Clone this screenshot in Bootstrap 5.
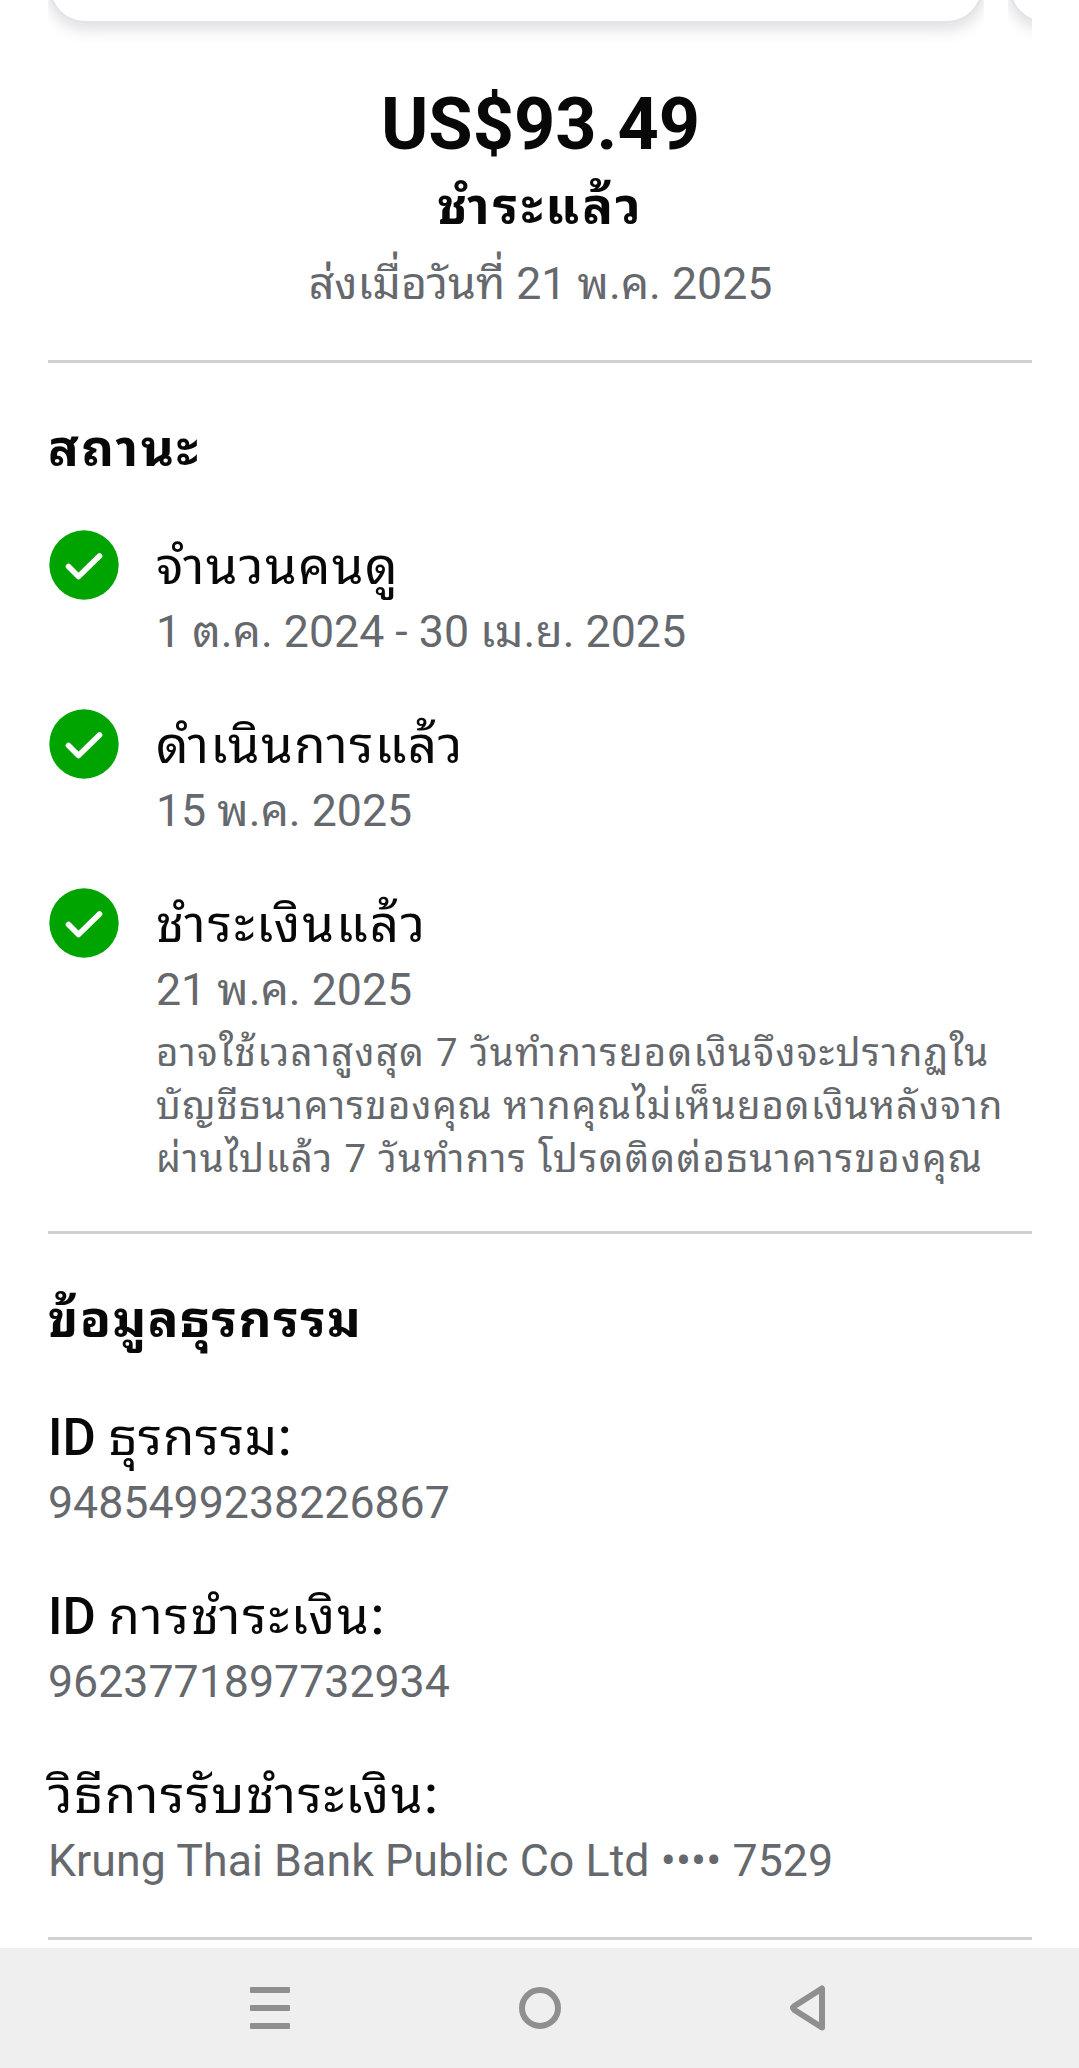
<!DOCTYPE html>
<html lang="th">
<head>
<meta charset="utf-8">
<meta name="viewport" content="width=device-width, initial-scale=1">
<title>US$93.49</title>
<link href="https://cdn.jsdelivr.net/npm/bootstrap@5.3.0/dist/css/bootstrap.min.css" rel="stylesheet">
<script src="https://cdn.jsdelivr.net/npm/bootstrap@5.3.0/dist/js/bootstrap.bundle.min.js"></script>
<style>
  body { font-family: Roboto, "Noto Sans Thai Looped", "Noto Sans", sans-serif; color: #080809; background: #fff; }
  .screen { height: 2068px; }
  .pay-body { padding: 0 47px 0 48px; }
  /* carousel of payouts, scrolled so only the bottom edge shows */
  .strip { height: 83px; gap: 24px; }
  .strip-slot { width: 936px; height: 60px; overflow: hidden; }
  .strip-slot.next-slot { width: 24px; }
  .payout { width: 936px; height: 180px; margin-top: -156px; border: 3px solid #e2e5e9; border-radius: 37px; box-shadow: 0 5px 16px rgba(0,0,0,.14); }
  .amount { font-size: 72px; line-height: 84px; font-weight: 700; padding-left: 1px; }
  .line-title { font-size: 51px; line-height: 60px; white-space: nowrap; }
  .line-sub { font-size: 44.7px; line-height: 60px; color: #65686c; white-space: nowrap; }
  .line-note { font-size: 38.4px; line-height: 53px; color: #65686c; margin-top: 6px; white-space: nowrap; }
  .paid { margin-top: 10px; padding-left: 1px; letter-spacing: 3px; }
  .sent { margin-top: 17px; padding-left: 1px; }
  .rule { height: 3px; background: #ced0d4; margin-top: 46px; }
  .section-head { margin-top: 56px; margin-bottom: 50px; }
  .step { gap: 36px; margin-bottom: 46px; }
  .step:last-child { margin-bottom: 0; }
  .step-text { padding-top: 8px; }
  .step-text .line-sub { margin-top: 5px; }
  .info-head { margin-top: 56px; margin-bottom: 58px; }
  .info { margin-bottom: 54px; }
  .info:last-child { margin-bottom: 0; }
  .info .line-sub { margin-top: 5px; }
  .info + .info + .info .line-sub { letter-spacing: .07px; }
  .latin-id { font-weight: 500; }
  .sp-8 { letter-spacing: .8px; } .sp-11 { letter-spacing: 1.08px; } .sp-13 { letter-spacing: 1.38px; }
  .sp-15 { letter-spacing: 1.5px; } .sp-17 { letter-spacing: 1.65px; } .sp-20 { letter-spacing: 2px; } .sp-25 { letter-spacing: 2.5px; }
  .sysbar { height: 120px; background: #efefef; padding: 0 225px; }
</style>
</head>
<body>
<div class="screen d-flex flex-column overflow-hidden">
  <main class="pay-body flex-grow-1">
    <div class="strip d-flex overflow-hidden">
      <div class="strip-slot flex-shrink-0"><div class="payout"></div></div>
      <div class="strip-slot next-slot flex-shrink-0"><div class="payout"></div></div>
    </div>

    <header class="text-center">
      <div class="amount">US$93.49</div>
      <div class="line-title paid fw-bold">ชำระแล้ว</div>
      <div class="line-sub sent">ส่งเมื่อวันที่ 21 พ.ค. 2025</div>
    </header>
    <div class="rule"></div>

    <section>
      <div class="line-title section-head fw-bold sp-25">สถานะ</div>
      <div class="step d-flex align-items-start">
        <svg class="flex-shrink-0" width="72" height="72" viewBox="0 0 72 72"><circle cx="36" cy="36" r="34.7" fill="#00a400"/><path d="M20.5 37.500 30.500 47.500 51.500 27" fill="none" stroke="#fff" stroke-width="5.600" stroke-linecap="round" stroke-linejoin="round"/></svg>
        <div class="step-text">
          <div class="line-title sp-13">จำนวนคนดู</div>
          <div class="line-sub">1 ต.ค. 2024 - 30 เม.ย. 2025</div>
        </div>
      </div>
      <div class="step d-flex align-items-start">
        <svg class="flex-shrink-0" width="72" height="72" viewBox="0 0 72 72"><circle cx="36" cy="36" r="34.7" fill="#00a400"/><path d="M20.5 37.500 30.500 47.500 51.500 27" fill="none" stroke="#fff" stroke-width="5.600" stroke-linecap="round" stroke-linejoin="round"/></svg>
        <div class="step-text">
          <div class="line-title sp-13">ดำเนินการแล้ว</div>
          <div class="line-sub">15 พ.ค. 2025</div>
        </div>
      </div>
      <div class="step d-flex align-items-start">
        <svg class="flex-shrink-0" width="72" height="72" viewBox="0 0 72 72"><circle cx="36" cy="36" r="34.7" fill="#00a400"/><path d="M20.5 37.500 30.500 47.500 51.500 27" fill="none" stroke="#fff" stroke-width="5.600" stroke-linecap="round" stroke-linejoin="round"/></svg>
        <div class="step-text">
          <div class="line-title sp-20">ชำระเงินแล้ว</div>
          <div class="line-sub">21 พ.ค. 2025</div>
          <div class="line-note">
            <div class="sp-13">อาจใช้เวลาสูงสุด 7 วันทำการยอดเงินจึงจะปรากฏใน</div>
            <div class="sp-11">บัญชีธนาคารของคุณ หากคุณไม่เห็นยอดเงินหลังจาก</div>
            <div class="sp-13">ผ่านไปแล้ว 7 วันทำการ โปรดติดต่อธนาคารของคุณ</div>
          </div>
        </div>
      </div>
    </section>
    <div class="rule"></div>

    <section>
      <div class="line-title info-head fw-bold sp-15">ข้อมูลธุรกรรม</div>
      <div>
        <div class="info">
          <div class="line-title"><span class="latin-id">ID</span> <span class="sp-8">ธุรกรรม<span class="latin-id">:</span></span></div>
          <div class="line-sub">9485499238226867</div>
        </div>
        <div class="info">
          <div class="line-title"><span class="latin-id">ID</span> <span class="sp-20">การชำระเงิน<span class="latin-id">:</span></span></div>
          <div class="line-sub">9623771897732934</div>
        </div>
        <div class="info">
          <div class="line-title sp-17">วิธีการรับชำระเงิน<span class="latin-id">:</span></div>
          <div class="line-sub">Krung Thai Bank Public Co Ltd •••• 7529</div>
        </div>
      </div>
    </section>
    <div class="rule"></div>
  </main>

  <nav class="sysbar d-flex justify-content-between align-items-center flex-shrink-0">
    <svg width="90" height="60" viewBox="225 1978 90 60" fill="#8f8f8f"><rect x="250" y="1987" width="40" height="6" rx="1"/><rect x="250" y="2005" width="40" height="6" rx="1"/><rect x="250" y="2023" width="40" height="6" rx="1"/></svg>
    <svg width="60" height="60" viewBox="510 1978 60 60"><circle cx="540" cy="2008" r="18" fill="none" stroke="#8f8f8f" stroke-width="6"/></svg>
    <svg width="90" height="60" viewBox="764 1978 90 60"><path d="M822 1988.500V2027.500L794.500 2010Q791.500 2008 794.500 2006Z" fill="none" stroke="#8f8f8f" stroke-width="6" stroke-linejoin="round"/></svg>
  </nav>
</div>
</body>
</html>
